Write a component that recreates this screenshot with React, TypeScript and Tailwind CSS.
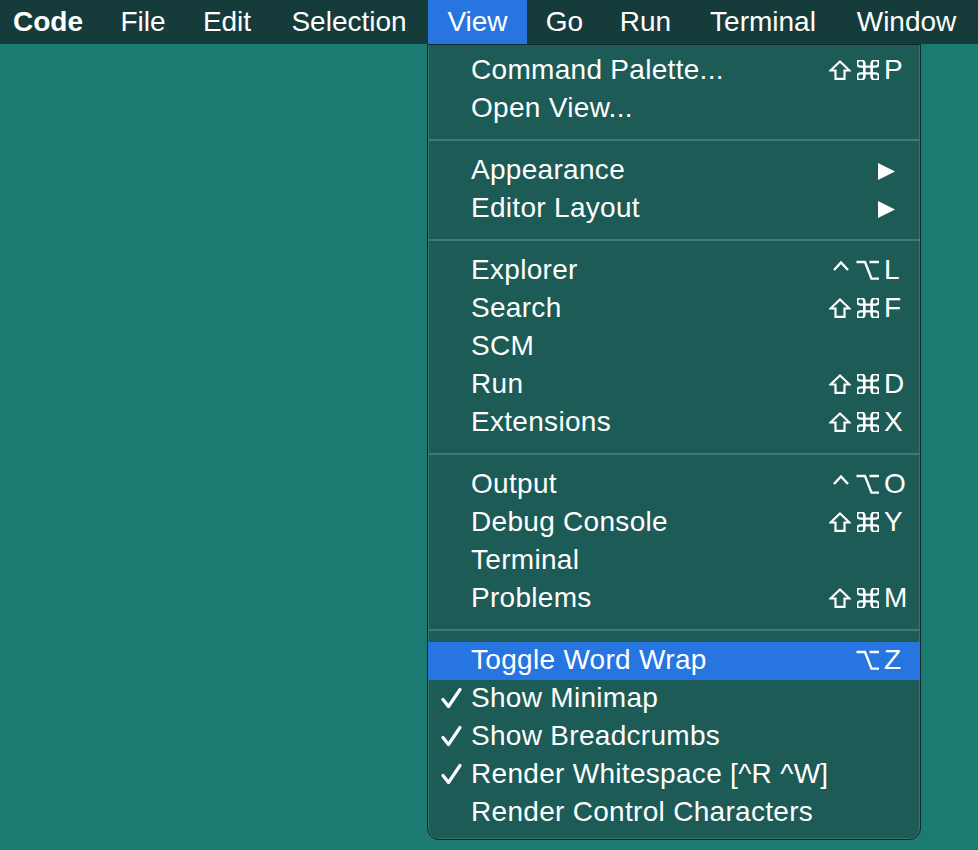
import type { ReactNode } from "react";

// macOS style menu bar with the View menu open

function Shift() {
  return (
    <svg width="22" height="20" viewBox="0 0 22 20" fill="none" stroke="white" strokeWidth="2.2" strokeLinejoin="miter">
      <path d="M11 1.5 L20.5 10.5 H15.5 V18.8 H6.5 V10.5 H1.5 Z" />
    </svg>
  );
}

function Cmd() {
  return (
    <svg width="22" height="20" viewBox="3 3 18 18" fill="none" stroke="white" strokeWidth="2.1" preserveAspectRatio="none">
      <path d="M15 6v12a3 3 0 1 0 3-3H6a3 3 0 1 0 3 3V6a3 3 0 1 0-3 3h12a3 3 0 1 0-3-3" />
    </svg>
  );
}

function Ctrl() {
  return (
    <svg width="18" height="20" viewBox="0 0 18 20" fill="none" stroke="white" strokeWidth="2.4">
      <path d="M2 10 L9 2.5 L16 10" />
    </svg>
  );
}

function Opt() {
  return (
    <svg width="23" height="20" viewBox="0 0 23 20" fill="none" stroke="white" strokeWidth="2.4">
      <path d="M0.5 2 H9 L15.5 18.6 H23 M13.5 2 H23" />
    </svg>
  );
}

function Check() {
  return (
    <svg width="21" height="22" viewBox="0 0 21 22" fill="none" stroke="white" strokeWidth="3.2" strokeLinecap="round" strokeLinejoin="round">
      <path d="M2 12.5 L7.5 19.5 L19 2.5" />
    </svg>
  );
}

function Arrow() {
  return (
    <svg width="17" height="17" viewBox="0 0 17 17" fill="white">
      <path d="M0 0 L17 8.5 L0 17 Z" />
    </svg>
  );
}

type Item = {
  label: string;
  mods?: ReactNode[];
  keyName?: string;
  sub?: boolean;
  checked?: boolean;
  active?: boolean;
};

const groups: Item[][] = [
  [
    { label: "Command Palette...", mods: [<Shift key="s" />, <Cmd key="c" />], keyName: "P" },
    { label: "Open View..." },
  ],
  [
    { label: "Appearance", sub: true },
    { label: "Editor Layout", sub: true },
  ],
  [
    { label: "Explorer", mods: [<Ctrl key="c" />, <Opt key="o" />], keyName: "L" },
    { label: "Search", mods: [<Shift key="s" />, <Cmd key="c" />], keyName: "F" },
    { label: "SCM" },
    { label: "Run", mods: [<Shift key="s" />, <Cmd key="c" />], keyName: "D" },
    { label: "Extensions", mods: [<Shift key="s" />, <Cmd key="c" />], keyName: "X" },
  ],
  [
    { label: "Output", mods: [<Ctrl key="c" />, <Opt key="o" />], keyName: "O" },
    { label: "Debug Console", mods: [<Shift key="s" />, <Cmd key="c" />], keyName: "Y" },
    { label: "Terminal" },
    { label: "Problems", mods: [<Shift key="s" />, <Cmd key="c" />], keyName: "M" },
  ],
  [
    { label: "Toggle Word Wrap", mods: [<Opt key="o" />], keyName: "Z", active: true },
    { label: "Show Minimap", checked: true },
    { label: "Show Breadcrumbs", checked: true },
    { label: "Render Whitespace [^R ^W]", checked: true },
    { label: "Render Control Characters" },
  ],
];

const bar = [
  { name: "Code", w: "w-[102px] pl-[13px] font-bold" },
  { name: "File", w: "w-[82px] justify-center" },
  { name: "Edit", w: "w-[86px] justify-center" },
  { name: "Selection", w: "w-[158px] justify-center" },
  { name: "View", w: "w-[99px] justify-center bg-[#2675e0]" },
  { name: "Go", w: "w-[75px] justify-center" },
  { name: "Run", w: "w-[87px] justify-center" },
  { name: "Terminal", w: "w-[148px] justify-center" },
  { name: "Window", w: "w-[139px] justify-center" },
];

function Row({ item }: { item: Item }) {
  return (
    <div
      className={
        "flex h-[38px] items-center pb-[3px] " + (item.active ? "bg-[#2675e0]" : "")
      }
    >
      <div className="flex w-[43px] shrink-0 pl-[13px]">{item.checked && <Check />}</div>
      <span className="whitespace-nowrap tracking-[0.3px]">{item.label}</span>
      {item.sub && (
        <div className="ml-auto mt-[3px] pr-[25px]">
          <Arrow />
        </div>
      )}
      {item.keyName && (
        <div className="ml-auto flex items-center">
          <div className="flex items-center gap-[6px]">{item.mods}</div>
          <span className="w-[41px] pl-[5px]">{item.keyName}</span>
        </div>
      )}
    </div>
  );
}

export default function App() {
  return (
    <div
      className="relative h-[850px] w-[978px] overflow-hidden bg-[#1b7a71] text-[28px] text-white"
      style={{ fontFamily: '"Liberation Sans", Arial, sans-serif' }}
    >
      <div className="flex h-[44px] bg-[#153b3a] leading-[38px]">
        {bar.map((b) => (
          <div key={b.name} className={"flex h-full shrink-0 items-center " + b.w}>
            {b.name}
          </div>
        ))}
      </div>

      <div className="absolute left-[427px] top-[44px] w-[494px] rounded-b-[12px] border border-[#0f2826] bg-[#1c5b56] pt-[7px] pb-[7px] shadow-[inset_1px_0_0_#3b736e,inset_-1px_0_0_#3b736e,inset_0_-1px_0_#3b736e]">
        {groups.map((g, gi) => (
          <div key={gi}>
            {gi > 0 && <div className="my-[11px] h-[2px] bg-[#3f7a75]" />}
            {g.map((it) => (
              <Row key={it.label} item={it} />
            ))}
          </div>
        ))}
      </div>
    </div>
  );
}
